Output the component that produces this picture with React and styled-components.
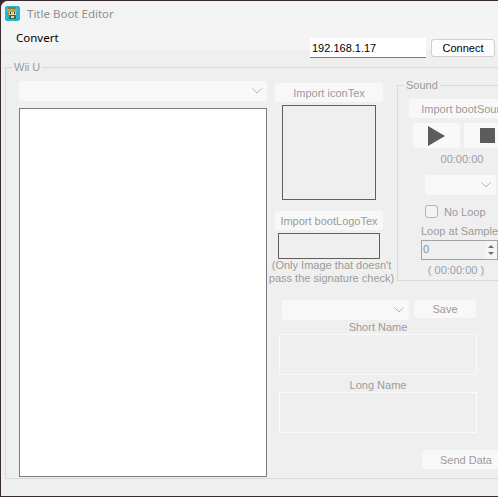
import styled, { createGlobalStyle } from "styled-components";

const GlobalStyle = createGlobalStyle`
  html, body {
    margin: 0;
    padding: 0;
    background: #3a2b30;
  }
  * {
    box-sizing: border-box;
  }
`;

const Screen = styled.div`
  width: 498px;
  height: 497px;
  padding: 1px 0 1px 1px;
  overflow: hidden;
  font-family: "Liberation Sans", Arial, sans-serif;
  font-size: 11px;
  color: #9b9b9b;
`;

const Window = styled.div`
  width: 520px;
  height: 495px;
  background: #efefef;
  border-top-left-radius: 7px;
  overflow: hidden;
`;

const TitleBar = styled.div`
  height: 24px;
  display: flex;
  align-items: center;
  gap: 7px;
  padding: 0 0 0 4px;
  background: #f3f3f3;
  color: #8f8f8f;
  font-family: "Noto Sans", sans-serif;
  font-size: 11.5px;
`;

const MenuRow = styled.div`
  height: 42px;
  display: flex;
  align-items: flex-start;
  background: linear-gradient(#f4f4f4 0 25px, #efefef 25px);
`;

const MenuItem = styled.div`
  width: 44px;
  margin: 5px 0 0 15px;
  color: #000;
  font-family: "Noto Sans", sans-serif;
  font-size: 11.5px;
`;

const IpInput = styled.input`
  width: 116px;
  height: 20px;
  margin: 13px 0 0 250px;
  padding: 0 2px;
  border: 0;
  border-bottom: 1px solid #7a7a7a;
  background: #fff;
  color: #000;
  font: inherit;
  outline: none;
`;

const ConnectButton = styled.div`
  width: 64px;
  height: 18px;
  margin: 14px 0 0 5px;
  display: flex;
  align-items: center;
  justify-content: center;
  background: #fdfdfd;
  border: 1px solid #cfcfcf;
  border-radius: 3px;
  color: #000;
`;

const Group = styled.div`
  position: relative;
  border: 1px solid #d9d9d9;
`;

const GroupLabel = styled.span`
  position: absolute;
  top: -10px;
  left: ${(p) => p.$left}px;
  padding: 0 2px;
  background: #efefef;
  line-height: 18px;
`;

const WiiGroup = styled(Group)`
  width: 540px;
  height: 412px;
  margin-left: 4px;
  padding: 13px 0 0 13px;
  display: flex;
  gap: 8px;
`;

const LeftColumn = styled.div`
  width: 248px;
  display: flex;
  flex-direction: column;
  gap: 7px;
`;

const Select = styled.div`
  width: ${(p) => p.$width}px;
  height: 20px;
  flex-shrink: 0;
  display: flex;
  align-items: center;
  justify-content: flex-end;
  padding-right: 5px;
  background: #f8f8f8;
  border-radius: 2px;
`;

const PreviewPanel = styled.div`
  height: 369px;
  background: #fff;
  border: 1px solid #7b7b7b;
`;

const RightColumn = styled.div`
  padding-top: 2px;
  display: flex;
  flex-direction: column;
`;

const TopRow = styled.div`
  display: flex;
  align-items: flex-start;
  height: 198px;
`;

const TextureColumn = styled.div`
  width: 108px;
  display: flex;
  flex-direction: column;
  align-items: center;
`;

const ActionButton = styled.div`
  width: ${(p) => p.$width}px;
  height: ${(p) => p.$height || 19}px;
  flex-shrink: 0;
  display: flex;
  align-items: center;
  justify-content: center;
  background: #f8f8f8;
  border-radius: 3px;
  white-space: nowrap;
`;

const TextureBox = styled.div`
  width: ${(p) => p.$width}px;
  height: ${(p) => p.$height}px;
  margin: 3px 0 ${(p) => p.$after}px;
  flex-shrink: 0;
  border: 1px solid #5f5f5f;
`;

const Hint = styled.div`
  margin: 0 0 0 5px;
  line-height: 13px;
  text-align: center;
  white-space: nowrap;
`;

const SoundGroup = styled(Group)`
  width: 140px;
  height: 196px;
  margin: 2px 0 0 14px;
  padding: 13px 0 0 11px;
`;

const SoundColumn = styled.div`
  width: 106px;
  display: flex;
  flex-direction: column;
  align-items: center;
`;

const ImportSoundButton = styled(ActionButton)`
  align-self: flex-start;
`;

const Transport = styled.div`
  display: flex;
  gap: 4px;
  margin-top: 5px;
`;

const TransportButton = styled(ActionButton)`
  width: 47px;
  height: 25px;
  background: #f9f9f9;
`;

const Time = styled.div`
  margin: 3px 0 7px;
  line-height: 17px;
  color: #98a0ac;
`;

const SoundSelect = styled(Select)`
  align-self: flex-start;
  margin-left: 16px;
`;

const CheckRow = styled.div`
  align-self: flex-start;
  display: flex;
  align-items: center;
  gap: 6px;
  margin: 10px 0 0 16px;
`;

const CheckBox = styled.div`
  width: 13px;
  height: 13px;
  border: 1px solid #b5b5b5;
  border-radius: 3px;
  background: #f3f3f3;
`;

const LoopLabel = styled.div`
  align-self: flex-start;
  margin: 6px 0 0 12px;
  line-height: 15px;
  white-space: nowrap;
`;

const Spinner = styled.div`
  align-self: flex-start;
  width: 77px;
  height: 20px;
  margin: 1px 0 0 12px;
  display: flex;
  justify-content: space-between;
  border: 1px solid #a3a3a3;
  padding-left: 1px;
  line-height: 17px;
  color: #7f8b9c;
`;

const SpinArrows = styled.div`
  width: 12px;
  display: flex;
  flex-direction: column;
  align-items: center;
  justify-content: center;
  gap: 4px;
  background: #f4f4f4;
`;

const SpinArrow = styled.div`
  width: 0;
  height: 0;
  border-left: 3px solid transparent;
  border-right: 3px solid transparent;
  ${(p) => (p.$down ? "border-top: 3px solid #6e6e6e;" : "border-bottom: 3px solid #6e6e6e;")}
`;

const LoopTime = styled.div`
  margin: 2px 0 0 -12px;
  line-height: 17px;
  color: #98a0ac;
`;

const DataSection = styled.div`
  margin-top: 19px;
  padding-left: 4px;
  width: 202px;
  display: flex;
  flex-direction: column;
  align-items: center;
`;

const SaveRow = styled.div`
  align-self: flex-start;
  display: flex;
  align-items: flex-start;
  gap: 5px;
  margin-left: 3px;
`;

const FieldLabel = styled.div`
  line-height: 14px;
`;

const NameField = styled.div`
  width: 198px;
  height: 41px;
  margin-bottom: 3px;
  border: 1px solid #fafafa;
`;

const SendRow = styled.div`
  align-self: flex-start;
  margin: 14px 0 0 143px;
`;

const Chevron = () => (
  <svg width="10" height="6" viewBox="0 0 10 6" fill="none" stroke="#b5b5b5" strokeWidth="1">
    <path d="M0.5 0.5 L5 5 L9.5 0.5" />
  </svg>
);

// tiny pixel version of the app icon
const AppIcon = () => (
  <svg width="15" height="15" viewBox="0 0 15 15" shapeRendering="crispEdges">
    <rect width="15" height="15" rx="3" fill="#27b4d6" />
    <rect x="3" y="1" width="8" height="2" fill="#7d7f40" />
    <rect x="2" y="3" width="10" height="3" fill="#b9a552" />
    <rect x="4" y="6" width="7" height="3" fill="#e4cfa8" />
    <rect x="5" y="6" width="1" height="2" fill="#2a3a2a" />
    <rect x="9" y="6" width="1" height="2" fill="#2a3a2a" />
    <rect x="2" y="6" width="2" height="4" fill="#a08c3c" />
    <rect x="4" y="9" width="7" height="4" fill="#3f6a45" />
    <rect x="6" y="10" width="3" height="2" fill="#d7d4b8" />
  </svg>
);

const PlayIcon = () => (
  <svg width="17" height="20" viewBox="0 0 17 20">
    <polygon points="0,0 17,10 0,20" fill="#5c5c5c" />
  </svg>
);

const StopIcon = () => (
  <svg width="15" height="15" viewBox="0 0 15 15">
    <rect width="15" height="15" fill="#5c5c5c" />
  </svg>
);

const App = () => {
  return (
    <Screen>
      <GlobalStyle />
      <Window>
        <TitleBar>
          <AppIcon />
          <span>Title Boot Editor</span>
        </TitleBar>
        <MenuRow>
          <MenuItem>Convert</MenuItem>
          <IpInput readOnly value="192.168.1.17" />
          <ConnectButton>Connect</ConnectButton>
        </MenuRow>
        <WiiGroup>
          <GroupLabel $left={6}>Wii U</GroupLabel>
          <LeftColumn>
            <Select $width={248}>
              <Chevron />
            </Select>
            <PreviewPanel />
          </LeftColumn>
          <RightColumn>
            <TopRow>
              <TextureColumn>
                <ActionButton $width={108}>Import iconTex</ActionButton>
                <TextureBox $width={94} $height={95} $after={11} />
                <ActionButton $width={108}>Import bootLogoTex</ActionButton>
                <TextureBox $width={102} $height={26} $after={0} />
                <Hint>
                  (Only Image that doesn't
                  <br />
                  pass the signature check)
                </Hint>
              </TextureColumn>
              <SoundGroup>
                <GroupLabel $left={6}>Sound</GroupLabel>
                <SoundColumn>
                  <ImportSoundButton $width={112}>Import bootSound</ImportSoundButton>
                  <Transport>
                    <TransportButton>
                      <PlayIcon />
                    </TransportButton>
                    <TransportButton>
                      <StopIcon />
                    </TransportButton>
                  </Transport>
                  <Time>00:00:00</Time>
                  <SoundSelect $width={71}>
                    <Chevron />
                  </SoundSelect>
                  <CheckRow>
                    <CheckBox />
                    <span>No Loop</span>
                  </CheckRow>
                  <LoopLabel>Loop at Sample</LoopLabel>
                  <Spinner>
                    <span>0</span>
                    <SpinArrows>
                      <SpinArrow />
                      <SpinArrow $down />
                    </SpinArrows>
                  </Spinner>
                  <LoopTime>( 00:00:00 )</LoopTime>
                </SoundColumn>
              </SoundGroup>
            </TopRow>
            <DataSection>
              <SaveRow>
                <Select $width={127}>
                  <Chevron />
                </Select>
                <ActionButton $width={62} $height={18}>
                  Save
                </ActionButton>
              </SaveRow>
              <FieldLabel>Short Name</FieldLabel>
              <NameField />
              <FieldLabel>Long Name</FieldLabel>
              <NameField />
              <SendRow>
                <ActionButton $width={88}>Send Data</ActionButton>
              </SendRow>
            </DataSection>
          </RightColumn>
        </WiiGroup>
      </Window>
    </Screen>
  );
};

export default App;
